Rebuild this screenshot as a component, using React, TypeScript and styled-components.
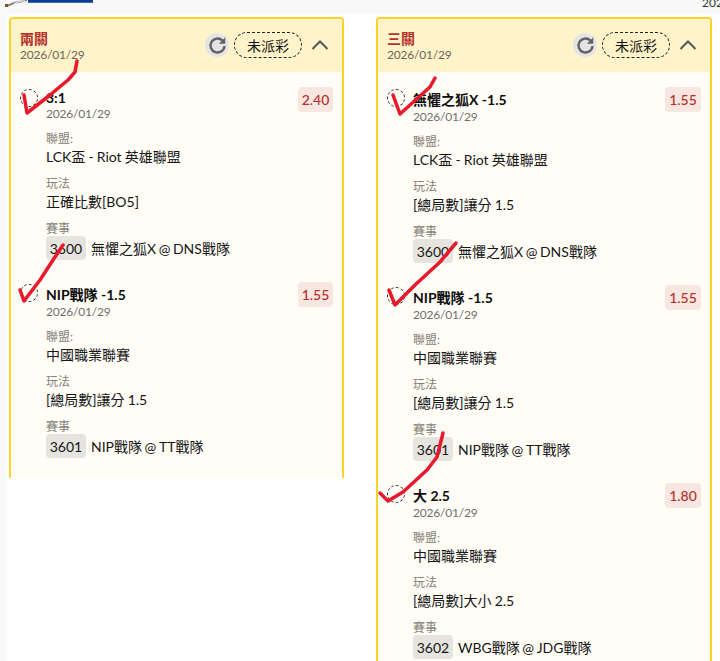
import React from 'react';
import styled, { createGlobalStyle } from 'styled-components';

const GlobalStyle = createGlobalStyle`
  html, body {
    margin: 0;
    padding: 0;
    height: 100%;
    background: #ffffff;
    overflow: hidden;
  }
  body {
    font-family: Lato, "Noto Sans CJK TC", sans-serif;
    color: #111;
  }
`;

const Page = styled.div`
  width: 720px;
  height: 661px;
  overflow: hidden;
  position: relative;
  background: linear-gradient(to right, #fafafa 7px, #ffffff 7px);
`;

const TopStrip = styled.div`
  height: 14px;
  background: #f9f9f9;
  display: flex;
  justify-content: space-between;
  align-items: flex-start;
  overflow: hidden;
`;

const Logo = styled.div`
  display: flex;
  align-items: flex-start;
  margin-left: 5px;
`;

const LogoBar = styled.div`
  width: 65px;
  height: 2px;
  background: #0b3f8f;
  border-bottom: 1px solid #3a6bb0;
`;

const ClippedYear = styled.div`
  font-size: 12px;
  line-height: 12px;
  color: #333;
  width: 18px;
  margin-top: -3px;
  overflow: hidden;
  white-space: nowrap;
`;

const Columns = styled.div`
  display: flex;
  align-items: flex-start;
  gap: 32px;
  padding: 3px 0 0 9px;
`;

const Slip = styled.section<{ $cut?: boolean }>`
  width: ${(p) => (p.$cut ? '335px' : '336px')};
  ${(p) => (p.$cut ? 'height: 461px;' : '')}
  border: 2px solid #fdd32a;
  ${(p) => (p.$cut ? 'border-bottom: none;' : '')}
  border-radius: 4px 4px 0 0;
  background: #fffdf6;
  box-sizing: border-box;
  overflow: hidden;
`;

const SlipHeader = styled.header`
  height: 53px;
  box-sizing: border-box;
  background: #fff3c9;
  display: flex;
  align-items: center;
  justify-content: space-between;
  padding: 0 13px 0 9px;
`;

const SlipHeading = styled.div`
  padding-top: 1px;
`;

const SlipTitle = styled.div`
  font-size: 14px;
  line-height: 17px;
  font-weight: 700;
  color: #b5322a;
`;

const SlipDate = styled.div`
  font-size: 12px;
  line-height: 16px;
  letter-spacing: -0.2px;
  color: #6b6658;
`;

const HeaderActions = styled.div`
  display: flex;
  align-items: center;
  margin-top: -1px;
`;

const RefreshButton = styled.div`
  width: 24px;
  height: 24px;
  border-radius: 50%;
  background: #e4e4e6;
  display: flex;
  align-items: center;
  justify-content: center;
  margin-right: 5px;
`;

const StatusPill = styled.div`
  width: 68px;
  height: 26px;
  box-sizing: border-box;
  border: 1px dashed #222;
  border-radius: 13px;
  font-size: 14px;
  display: flex;
  align-items: center;
  justify-content: center;
  margin-right: 9px;
`;

const Legs = styled.div`
  padding: 10px 9px 0 9px;
`;

const Leg = styled.div`
  display: flex;
  padding-bottom: 17px;
`;

const Radio = styled.div`
  width: 18px;
  height: 18px;
  box-sizing: border-box;
  border: 1px dashed #222;
  border-radius: 50%;
  margin: 7px 8px 0 0;
  flex: none;
`;

const LegMain = styled.div`
  flex: 1;
  min-width: 0;
`;

const LegTop = styled.div`
  display: flex;
  justify-content: space-between;
  align-items: flex-start;
`;

const LegTitle = styled.div`
  font-size: 14px;
  font-weight: 700;
  margin-top: 7px;
  color: #0d0d0d;
`;

const LegDate = styled.div`
  font-size: 12px;
  line-height: 15px;
  letter-spacing: -0.2px;
  color: #6f6f6f;
`;

const Odds = styled.div<{ $wide?: boolean }>`
  width: ${(p) => (p.$wide ? '36px' : '35px')};
  height: 25px;
  margin-top: 5px;
  border-radius: 4px;
  background: #f8e6e0;
  color: #b7312c;
  font-size: 14px;
  font-weight: 500;
  display: flex;
  align-items: center;
  justify-content: center;
`;

const Label = styled.div`
  font-size: 12px;
  line-height: 18px;
  color: #857f78;
  margin-top: 9px;
`;

const Value = styled.div`
  font-size: 14px;
  line-height: 18px;
  color: #161616;
  word-spacing: -0.5px;
`;

const MatchRow = styled.div`
  display: flex;
  align-items: center;
  font-size: 14px;
  color: #161616;
  margin-top: -2px;
  word-spacing: -1px;
`;

const MatchId = styled.span`
  width: 40px;
  height: 24px;
  border-radius: 4px;
  background: #e6e4df;
  display: flex;
  align-items: center;
  justify-content: center;
  margin-right: 5px;
`;

const InkMark = styled.svg`
  position: absolute;
  left: 0;
  top: 0;
  pointer-events: none;
`;

type LegData = {
  title: string;
  odds: string;
  league: string;
  play: string;
  id: string;
  match: string;
};

const twoLegs: LegData[] = [
  { title: '3:1', odds: '2.40', league: 'LCK盃 - Riot 英雄聯盟', play: '正確比數[BO5]', id: '3600', match: '無懼之狐X @ DNS戰隊' },
  { title: 'NIP戰隊 -1.5', odds: '1.55', league: '中國職業聯賽', play: '[總局數]讓分 1.5', id: '3601', match: 'NIP戰隊 @ TT戰隊' },
];

const threeLegs: LegData[] = [
  { title: '無懼之狐X -1.5', odds: '1.55', league: 'LCK盃 - Riot 英雄聯盟', play: '[總局數]讓分 1.5', id: '3600', match: '無懼之狐X @ DNS戰隊' },
  { title: 'NIP戰隊 -1.5', odds: '1.55', league: '中國職業聯賽', play: '[總局數]讓分 1.5', id: '3601', match: 'NIP戰隊 @ TT戰隊' },
  { title: '大 2.5', odds: '1.80', league: '中國職業聯賽', play: '[總局數]大小 2.5', id: '3602', match: 'WBG戰隊 @ JDG戰隊' },
];

const Card = ({ name, legs, cut }: { name: string; legs: LegData[]; cut?: boolean }) => (
  <Slip $cut={cut}>
    <SlipHeader>
      <SlipHeading>
        <SlipTitle>{name}</SlipTitle>
        <SlipDate>2026/01/29</SlipDate>
      </SlipHeading>
      <HeaderActions>
        <RefreshButton>
          <svg width="21" height="21" viewBox="0 0 18 18" fill="none">
            <path d="M15 9.4a6 6 0 1 1-1.8-4.7" stroke="#5f5f5f" strokeWidth="2" />
            <path d="M15.6 2v5.4h-5.4z" fill="#5f5f5f" />
          </svg>
        </RefreshButton>
        <StatusPill>未派彩</StatusPill>
        <svg width="18" height="12" viewBox="0 0 18 12" fill="none">
          <path d="M1.5 10L9 2.5l7.5 7.5" stroke="#555" strokeWidth="2" />
        </svg>
      </HeaderActions>
    </SlipHeader>
    <Legs>
      {legs.map((leg) => (
        <Leg key={leg.id}>
          <Radio />
          <LegMain>
            <LegTop>
              <div>
                <LegTitle>{leg.title}</LegTitle>
                <LegDate>2026/01/29</LegDate>
              </div>
              <Odds $wide={!cut}>{leg.odds}</Odds>
            </LegTop>
            <Label>聯盟:</Label>
            <Value>{leg.league}</Value>
            <Label>玩法</Label>
            <Value>{leg.play}</Value>
            <Label>賽事</Label>
            <MatchRow>
              <MatchId>{leg.id}</MatchId>
              {leg.match}
            </MatchRow>
          </LegMain>
        </Leg>
      ))}
    </Legs>
  </Slip>
);

const App = () => (
  <Page>
    <GlobalStyle />
    <TopStrip>
      <Logo>
        <svg width="23" height="9" viewBox="0 0 23 9" fill="none">
          <path d="M2 6L9 3l13-3" stroke="#8a8a8a" strokeWidth="2" />
          <path d="M9 4l6-3 5 0" stroke="#ffffff" strokeWidth="1" />
          <rect x="0" y="4" width="3" height="3" fill="#7a5520" />
        </svg>
        <LogoBar />
      </Logo>
      <ClippedYear>2026</ClippedYear>
    </TopStrip>
    <Columns>
      <Card name="兩關" legs={twoLegs} cut />
      <Card name="三關" legs={threeLegs} />
    </Columns>
    <InkMark width="720" height="661" viewBox="0 0 720 661" fill="none">
      <g stroke="#e8192c" strokeWidth="3.5" strokeLinecap="round" strokeLinejoin="round">
        <path d="M24 95L27 113L50 95L68 80L75 72L77 61" />
        <path d="M20 290L24 301L40 280L53 260L63 245" />
        <path d="M393 95L400 114L410 105L430 87L435 78" />
        <path d="M389 290L395 305L415 285L440 262L456 243" />
        <path d="M380 493L388 501L403 492L427 470L437 457L443 433" />
      </g>
    </InkMark>
  </Page>
);

export default App;
